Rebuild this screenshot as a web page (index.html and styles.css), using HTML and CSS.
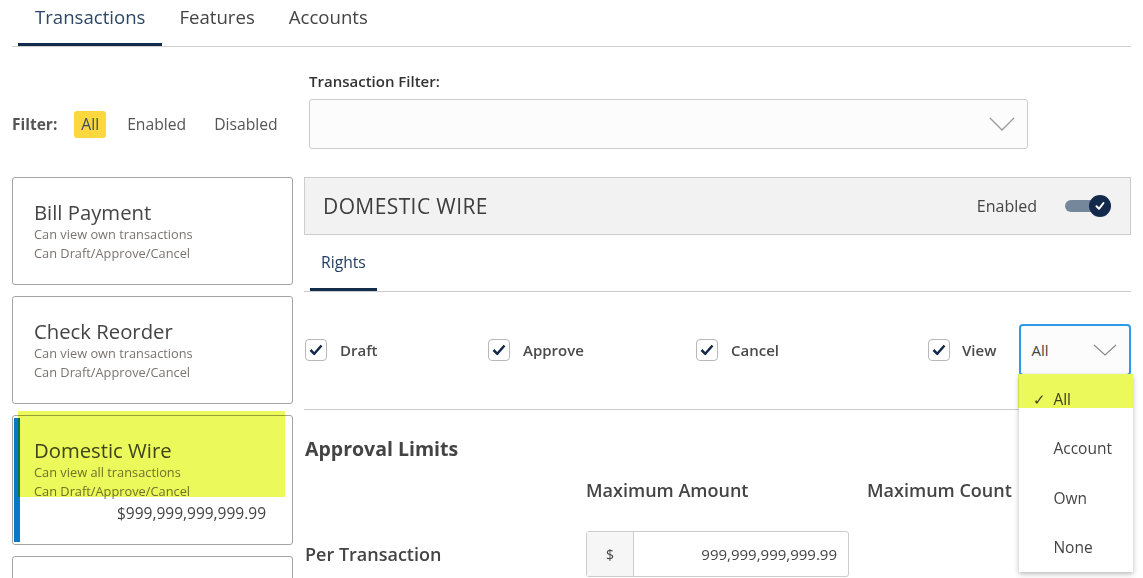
FILE: index.html
```html
<!DOCTYPE html>
<html lang="en">
<head>
<meta charset="utf-8">
<title>Transactions</title>
<link rel="stylesheet" href="styles.css">
</head>
<body>
<div class="page">
  <nav class="tabs">
    <div class="tab active">Transactions</div>
    <div class="tab">Features</div>
    <div class="tab">Accounts</div>
  </nav>

  <div class="filters">
    <div class="filter-left">
      <span class="filter-label">Filter:</span>
      <span class="pill active">All</span>
      <span class="pill">Enabled</span>
      <span class="pill">Disabled</span>
    </div>
    <div class="tx-filter">
      <div class="tx-label">Transaction Filter:</div>
      <div class="select-box">
        <svg class="chev" width="26" height="14" viewBox="0 0 26 14"><path d="M1 1 L13 13 L25 1" fill="none" stroke="#9a9a9a" stroke-width="1.3"/></svg>
      </div>
    </div>
  </div>

  <div class="main">
    <aside class="cards">
      <div class="card">
        <div class="card-title">Bill Payment</div>
        <div class="card-sub">Can view own transactions</div>
        <div class="card-sub">Can Draft/Approve/Cancel</div>
      </div>
      <div class="card">
        <div class="card-title">Check Reorder</div>
        <div class="card-sub">Can view own transactions</div>
        <div class="card-sub">Can Draft/Approve/Cancel</div>
      </div>
      <div class="card selected">
        <div class="card-title">Domestic Wire</div>
        <div class="card-sub">Can view all transactions</div>
        <div class="card-sub">Can Draft/Approve/Cancel</div>
        <div class="card-amount">$999,999,999,999.99</div>
        <span class="mark mark-card"></span>
      </div>
      <div class="card empty"></div>
    </aside>

    <section class="detail">
      <header class="detail-head">
        <h2 class="detail-title">DOMESTIC WIRE</h2>
        <div class="status">
          <span class="status-text">Enabled</span>
          <span class="toggle">
            <span class="track"></span>
            <span class="knob"><svg width="12" height="12" viewBox="0 0 12 12"><path d="M2.5 6.3 L5 8.8 L9.5 3" fill="none" stroke="#fff" stroke-width="2" stroke-linecap="round" stroke-linejoin="round"/></svg></span>
          </span>
        </div>
      </header>

      <nav class="subtabs">
        <div class="subtab active">Rights</div>
      </nav>

      <div class="rights">
        <div class="right">
          <span class="cb"><svg width="16" height="16" viewBox="0 0 16 16"><path d="M2.5 8 L6.3 11.8 L13.5 3.5" fill="none" stroke="#13294b" stroke-width="2.5" stroke-linejoin="round"/></svg></span>
          <span class="right-label">Draft</span>
        </div>
        <div class="right">
          <span class="cb"><svg width="16" height="16" viewBox="0 0 16 16"><path d="M2.5 8 L6.3 11.8 L13.5 3.5" fill="none" stroke="#13294b" stroke-width="2.5" stroke-linejoin="round"/></svg></span>
          <span class="right-label">Approve</span>
        </div>
        <div class="right">
          <span class="cb"><svg width="16" height="16" viewBox="0 0 16 16"><path d="M2.5 8 L6.3 11.8 L13.5 3.5" fill="none" stroke="#13294b" stroke-width="2.5" stroke-linejoin="round"/></svg></span>
          <span class="right-label">Cancel</span>
        </div>
        <div class="right view">
          <span class="cb"><svg width="16" height="16" viewBox="0 0 16 16"><path d="M2.5 8 L6.3 11.8 L13.5 3.5" fill="none" stroke="#13294b" stroke-width="2.5" stroke-linejoin="round"/></svg></span>
          <span class="right-label">View</span>
          <div class="view-select">
            <span class="view-value">All</span>
            <svg width="24" height="12" viewBox="0 0 24 12"><path d="M1 1 L12 11 L23 1" fill="none" stroke="#8a8a8a" stroke-width="1.2"/></svg>
            <ul class="menu">
              <li class="menu-item selected"><span class="menu-check">✓</span>All</li>
              <li class="menu-item"><span class="menu-check"></span>Account</li>
              <li class="menu-item"><span class="menu-check"></span>Own</li>
              <li class="menu-item"><span class="menu-check"></span>None</li>
              <span class="mark mark-menu"></span>
            </ul>
          </div>
        </div>
      </div>

      <div class="limits">
        <h3 class="limits-title">Approval Limits</h3>
        <div class="limits-grid">
          <div></div>
          <div class="col-h">Maximum Amount</div>
          <div class="col-h">Maximum Count</div>
          <div class="row-h">Per Transaction</div>
          <div class="input-group">
            <span class="addon">$</span>
            <span class="val">999,999,999,999.99</span>
          </div>
          <div></div>
        </div>
      </div>
    </section>
  </div>
</div>
</body>
</html>
```

FILE: styles.css
```css
html, body {
  margin: 0;
  padding: 0;
  overflow: hidden;
  background: #fff;
}
body {
  font-family: "Open Sans", "Noto Sans", sans-serif;
  color: #444;
}
.page {
  padding: 0 12px;
  width: 1143px;
  box-sizing: border-box;
}

/* top tabs */
.tabs {
  display: flex;
  height: 47px;
  box-sizing: border-box;
  padding-left: 6px;
  border-bottom: 1px solid #cfcfcf;
}
.tab {
  height: 46px;
  box-sizing: border-box;
  padding: 5px 17px 0;
  font-size: 18.6px;
  line-height: 24px;
  color: #444;
  border-bottom: 3px solid transparent;
}
.tab.active {
  color: #2d4766;
  border-bottom-color: #142c4c;
}

/* filter row */
.filters {
  display: flex;
  align-items: flex-end;
  margin-top: 24px;
}
.filter-left {
  width: 281px;
  height: 50px;
  display: flex;
  align-items: center;
}
.filter-label {
  font-size: 15.5px;
  font-weight: 700;
  color: #555;
}
.pill {
  font-size: 15.7px;
  line-height: 21px;
  padding: 3px 7px;
  border-radius: 3px;
  color: #555;
  margin-left: 14px;
}
.pill.active {
  background: #fdd83c;
  color: #3a4a6a;
  margin-left: 17px;
}
.tx-filter {
  margin-left: 16px;
}
.tx-label {
  font-size: 15px;
  font-weight: 600;
  line-height: 20px;
  color: #333;
  margin-bottom: 8px;
}
.select-box {
  width: 719px;
  height: 50px;
  box-sizing: border-box;
  border: 1px solid #cccccc;
  border-radius: 3px;
  background: #fcfcfc;
  display: flex;
  align-items: center;
  justify-content: flex-end;
  padding-right: 12px;
}

/* main */
.main {
  display: flex;
  gap: 11px;
  margin-top: 28px;
}
.cards {
  width: 281px;
  flex: none;
  display: flex;
  flex-direction: column;
  gap: 11px;
}
.card {
  position: relative;
  border: 1px solid #a3a3a3;
  border-radius: 3px;
  padding: 21px 20px 21px 21px;
}
.card-title {
  font-size: 20.3px;
  line-height: 26px;
  color: #444;
}
.card-sub {
  font-size: 12.8px;
  line-height: 19px;
  color: #7a7470;
}
.card.selected {
  padding-bottom: 19px;
}
.card.selected::before {
  content: "";
  position: absolute;
  left: 1px;
  top: 2px;
  bottom: 2px;
  width: 6px;
  background: #0a78c6;
}
.card-amount {
  text-align: right;
  font-size: 15.5px;
  line-height: 24px;
  color: #444;
  margin-right: 6px;
}
.card.empty {
  height: 60px;
}
.mark {
  position: absolute;
  background: #ebf95a;
  mix-blend-mode: multiply;
  pointer-events: none;
}
.mark-card {
  left: 5px;
  top: -5px;
  width: 267px;
  height: 86px;
}

/* detail */
.detail {
  flex: 1;
  min-width: 0;
}
.detail-head {
  height: 58px;
  box-sizing: border-box;
  background: #f2f2f2;
  border: 1px solid #cccccc;
  display: flex;
  align-items: center;
  justify-content: space-between;
  padding: 0 19px 0 18px;
}
.detail-title {
  margin: 0;
  font-size: 21px;
  font-weight: 400;
  letter-spacing: 0.4px;
  color: #3d3d3d;
}
.status {
  display: flex;
  align-items: center;
  gap: 28px;
}
.status-text {
  font-size: 16px;
  color: #444;
}
.toggle {
  display: flex;
  align-items: center;
}
.track {
  width: 36px;
  height: 12px;
  border-radius: 6px;
  background: #75879a;
}
.knob {
  width: 22px;
  height: 22px;
  border-radius: 50%;
  background: #13294b;
  margin-left: -12px;
  display: flex;
  align-items: center;
  justify-content: center;
}

.subtabs {
  display: flex;
  height: 57px;
  box-sizing: border-box;
  padding-left: 6px;
  border-bottom: 1px solid #cccccc;
}
.subtab {
  height: 56px;
  box-sizing: border-box;
  padding: 15px 11px 0;
  font-size: 15.7px;
  line-height: 24px;
  color: #1f3a5f;
  border-bottom: 3px solid transparent;
}
.subtab.active {
  border-bottom-color: #142c4c;
}

.rights {
  display: grid;
  grid-template-columns: 183px 208px 232px 1fr;
  align-items: center;
  padding: 32px 0 33px 1px;
  border-bottom: 1px solid #cccccc;
}
.right {
  display: flex;
  align-items: center;
  gap: 13px;
}
.cb {
  width: 22px;
  height: 22px;
  box-sizing: border-box;
  border: 1.5px solid #b8b8b8;
  border-radius: 4px;
  display: flex;
  align-items: center;
  justify-content: center;
  background: #fff;
}
.right-label {
  font-size: 15px;
  font-weight: 600;
  color: #4a4a4a;
}
.right.view {
  gap: 12px;
}
.view-select {
  position: relative;
  margin-left: 11px;
  width: 112px;
  height: 52px;
  box-sizing: border-box;
  border: 2px solid #2d9ae6;
  border-radius: 4px;
  display: flex;
  align-items: center;
  justify-content: space-between;
  padding: 0 12px 0 10px;
  background: #fcfcfc;
}
.view-value {
  font-size: 15px;
  color: #444;
}
.menu {
  position: absolute;
  top: 100%;
  left: -2px;
  width: 114px;
  margin: 0;
  padding: 0;
  list-style: none;
  background: #fff;
  box-shadow: 0 2px 5px rgba(0, 0, 0, 0.28);
  z-index: 10;
}
.menu-item {
  display: flex;
  align-items: center;
  height: 49.5px;
  padding-left: 14px;
  font-size: 15.5px;
  color: #444;
}
.menu-check {
  width: 20px;
  font-size: 15px;
}
.mark-menu {
  left: -1px;
  top: 0;
  width: 115px;
  height: 34px;
}

.limits {
  padding-left: 1px;
}
.limits-title {
  margin: 26px 0 0;
  font-size: 19.5px;
  font-weight: 700;
  line-height: 26px;
  color: #444;
}
.limits-grid {
  display: grid;
  grid-template-columns: 281px 281px 1fr;
  row-gap: 29px;
  align-items: center;
  margin-top: 16px;
}
.col-h {
  font-size: 18px;
  font-weight: 600;
  line-height: 24px;
  color: #444;
}
.row-h {
  font-size: 18px;
  font-weight: 600;
  line-height: 24px;
  color: #444;
}
.input-group {
  display: flex;
  width: 263px;
  height: 46px;
  box-sizing: border-box;
  border: 1px solid #cccccc;
  border-radius: 3px;
}
.addon {
  width: 47px;
  flex: none;
  box-sizing: border-box;
  border-right: 1px solid #cccccc;
  background: #f6f6f6;
  display: flex;
  align-items: center;
  justify-content: center;
  font-size: 14px;
  color: #444;
}
.val {
  flex: 1;
  display: flex;
  align-items: center;
  justify-content: flex-end;
  padding-right: 11px;
  font-size: 15px;
  color: #444;
}
```
